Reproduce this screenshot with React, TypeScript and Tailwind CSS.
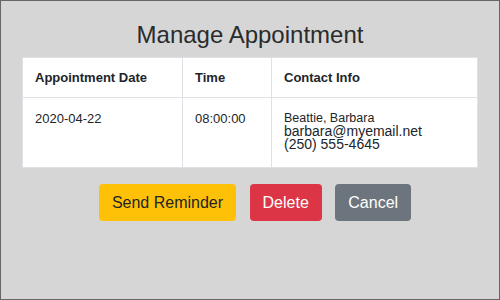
export default function App() {
  return (
    <div className="w-[500px] h-[300px] bg-[#d6d6d6] border border-[#666666] font-['Liberation_Sans',Arial,sans-serif] text-[#212529]">
      <h1 className="pt-[19px] text-center text-[24px] leading-[29px] text-[#2b2b2b]">Manage Appointment</h1>

      <table className="mt-[8px] ml-[21px] w-[456px] bg-white border-collapse border border-[#dee2e6] table-fixed">
        <thead>
          <tr className="text-left text-[13px] font-bold leading-[15px]">
            <th className="w-[160px] px-[12px] py-[12px] border border-[#dee2e6]">Appointment Date</th>
            <th className="w-[89px] px-[12px] py-[12px] border border-[#dee2e6]">Time</th>
            <th className="px-[12px] py-[12px] border border-[#dee2e6]">Contact Info</th>
          </tr>
        </thead>
        <tbody>
          <tr className="align-top text-[13px] leading-[13px]">
            <td className="px-[12px] pt-[14px] pb-[16px] border border-[#dee2e6]">2020-04-22</td>
            <td className="px-[12px] pt-[14px] pb-[16px] border border-[#dee2e6]">08:00:00</td>
            <td className="px-[12px] pt-[14px] pb-[16px] border border-[#dee2e6]">
              <div className="text-[12.5px]">Beattie, Barbara</div>
              <div className="text-[14px]">barbara@myemail.net</div>
              <div className="text-[14px]">(250) 555-4645</div>
            </td>
          </tr>
        </tbody>
      </table>

      <div className="mt-[16px] pl-[10px] flex justify-center gap-[13.5px] text-[16px] leading-[24px]">
        <button className="h-[37px] px-[13px] rounded-[4px] bg-[#ffc107] text-[#212529]">Send Reminder</button>
        <button className="h-[37px] px-[13px] rounded-[4px] bg-[#dc3545] text-white">Delete</button>
        <button className="h-[37px] px-[13px] rounded-[4px] bg-[#6c757d] text-white">Cancel</button>
      </div>
    </div>
  );
}
